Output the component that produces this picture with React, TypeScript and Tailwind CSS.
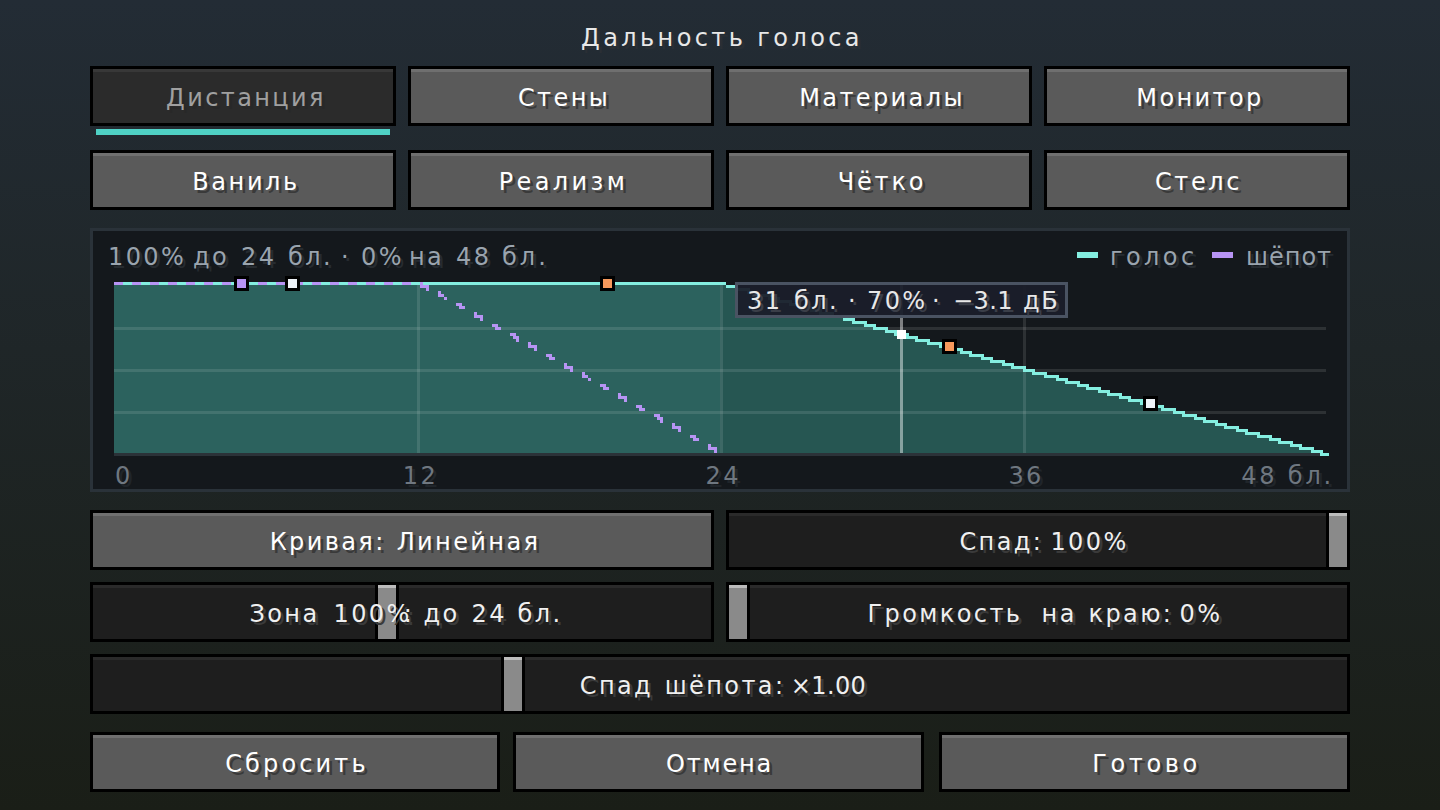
import React from "react";

const TABS = ["Дистанция", "Стены", "Материалы", "Монитор"];

const snap = (v: number) => Math.round(v / 3) * 3;
const floor3 = (v: number) => Math.floor(v / 3) * 3;

// voice curve: flat to 726, then 3px stairs down to the baseline
const voiceSteps = Array.from({ length: 58 }, (_, n) => {
  const x = n === 0 ? 114 : floor3(726 + (n - 1) * 10.65);
  const next = n === 57 ? 1326 : floor3(726 + n * 10.65);
  return { x, next, y: 282 + n * 3 };
});

// whisper curve: dashes of 9px every 18px
const whisperY = (x: number) => 282 + (x - 420) * 0.5625;
const whisperCols: { x: number; top: number; h: number }[] = [];
for (let x = 420; x < 720; x += 3) {
  if ((x - 420) % 18 < 9) {
    const top = snap(whisperY(x));
    whisperCols.push({ x, top, h: snap(whisperY(x + 2.9)) + 3 - top });
  }
}
const whisperDashes = Array.from({ length: 17 }, (_, i) => 114 + i * 18);

function Marker({ x, y, color }: { x: number; y: number; color: string }) {
  return (
    <g>
      <rect x={x} y={y} width="15" height="15" fill="#000" />
      <rect x={x + 3} y={y + 3} width="9" height="9" fill={color} />
    </g>
  );
}

function Chart() {
  return (
    <svg className="ml-[21px] block" width="1215" height="180" viewBox="114 276 1215 180" shapeRendering="crispEdges">
      {voiceSteps.map((s) => (
        <rect
          key={s.x}
          x={s.x}
          y={s.y + 3}
          width={s.next - s.x}
          height={Math.max(453 - s.y - 3, 0)}
          fill={s.x < 720 ? "#2c625e" : "#265652"}
        />
      ))}
      <rect x="114" y="285" width="606" height="168" fill="#2c625e" />
      <rect x="720" y="285" width="9" height="168" fill="#265652" />
      {[327, 369, 411].map((y) => (
        <rect key={y} x="114" y={y} width="1212" height="3" fill="#fff" fillOpacity="0.11" />
      ))}
      {[417, 720, 1023].map((x) => (
        <rect key={x} x={x} y="285" width="3" height="168" fill="#fff" fillOpacity="0.11" />
      ))}
      <rect x="114" y="453" width="1212" height="3" fill="#2b3238" />
      <rect x="900" y="285" width="3" height="168" fill="#fff" fillOpacity="0.45" />
      {voiceSteps.map((s, i) => (
        <rect
          key={s.x}
          x={s.x}
          y={s.y}
          width={s.next - s.x + (i === 0 || i === 1 ? 0 : 3)}
          height="3"
          fill="#84eee0"
        />
      ))}
      {whisperDashes.map((x) => (
        <rect key={x} x={x} y="282" width="9" height="3" fill="#b794f4" />
      ))}
      {whisperCols.map((c) => (
        <rect key={c.x} x={c.x} y={c.top} width="3" height={c.h} fill="#b794f4" />
      ))}
      <Marker x={234} y={276} color="#b794f4" />
      <Marker x={285} y={276} color="#edf2f7" />
      <Marker x={600} y={276} color="#f6995c" />
      <Marker x={942} y={339} color="#f6995c" />
      <Marker x={1143} y={396} color="#edf2f7" />
      <rect x="897" y="330" width="9" height="9" fill="#fff" />
    </svg>
  );
}

// word with a fixed advance, the game font's spacing is uneven
function W({ w, children }: { w?: string; children: React.ReactNode }) {
  return <span className={`shrink-0 ${w ?? ""}`}>{children}</span>;
}

function Button({ label, active, children }: { label: React.ReactNode; active?: boolean; children?: React.ReactNode }) {
  return (
    <div
      className={
        active
          ? "relative flex h-[60px] items-center justify-center border-[3px] border-black bg-[#2b2b2b] pt-[4px] pl-[6px] text-[#a0a0a0] shadow-[inset_0_3px_0_#383838] [text-shadow:3px_3px_0_#282828]"
          : "relative flex h-[60px] items-center justify-center border-[3px] border-black bg-[#5a5a5a] pt-[4px] pl-[6px] text-white shadow-[inset_0_3px_0_#6f6f6f] [text-shadow:3px_3px_0_#3a3a3a]"
      }
    >
      {label}
      {children}
    </div>
  );
}

function Slider({ children, handle, shift }: { children: React.ReactNode; handle: string; shift: string }) {
  return (
    <div className="relative flex h-[60px] items-center justify-center border-[3px] border-black bg-[#1e1e1e] pt-[4px] text-[#f0f0f0] shadow-[inset_0_3px_0_#2a2a2a] [text-shadow:3px_3px_0_#3a3a3a]">
      <div className={`absolute top-0 bottom-0 w-[24px] border-x-[3px] border-black bg-[#8a8a8a] shadow-[inset_0_3px_0_#bcbcbc] ${handle}`} />
      <div className={`relative flex ${shift}`}>{children}</div>
    </div>
  );
}

export default function App() {
  return (
    <div className="flex h-[810px] w-[1440px] flex-col overflow-hidden bg-linear-to-b from-[#232c35] to-[#1a1e17] px-[90px] font-['DejaVu_Sans',sans-serif] text-[24px] leading-none tracking-[2.4px] whitespace-nowrap">
      <div className="flex h-[66px] shrink-0 items-center justify-center pt-[10px] pl-[4px] tracking-[3.4px] text-[#e8e8e8] [text-shadow:3px_3px_0_#2a2f35]">
        Дальность голоса
      </div>

      <div className="grid grid-cols-4 gap-3">
        {TABS.map((t, i) => (
          <Button key={t} label={t} active={i === 0}>
            {i === 0 && <div className="absolute right-[3px] -bottom-[12px] left-[3px] h-[6px] bg-[#4fd1c5]" />}
          </Button>
        ))}
      </div>

      <div className="mt-6 grid grid-cols-4 gap-3">
        <Button label={<span className="tracking-[2.6px]">Ваниль</span>} />
        <Button label={<span className="-ml-[1px] tracking-[3.4px]">Реализм</span>} />
        <Button label={<span className="tracking-[2.8px]">Чётко</span>} />
        <Button label={<span className="-ml-[3px] tracking-[2.6px]">Стелс</span>} />
      </div>

      {/* graph panel */}
      <div className="relative mt-[18px] h-[264px] border-[3px] border-[#2a3239] bg-[#14181c]">
        <div className="flex h-[45px] items-center justify-between pt-[7px] pr-[13px] pl-[15px] text-[#9aa4ae] [text-shadow:3px_3px_0_#262b30]">
          <div className="flex">
            <W w="w-[85px]">100%</W>
            <W w="w-[48px]">до</W>
            <W w="w-[47px]">24</W>
            <W w="w-[53px]">бл.</W>
            <W w="w-[20px]">·</W>
            <W w="w-[48px]">0%</W>
            <W w="w-[47px]">на</W>
            <W w="w-[46px]">48</W>
            <W w="tracking-[3px]">бл.</W>
          </div>
          <div className="flex items-center">
            <div className="mr-[12px] mb-[5px] h-[6px] w-[21px] bg-[#84eee0]" />
            <W w="w-[102px] tracking-[3.4px]">голос</W>
            <div className="mr-[13px] mb-[5px] h-[6px] w-[21px] bg-[#b794f4]" />
            <W w="w-[88px] tracking-[1px]">шёпот</W>
          </div>
        </div>
        <Chart />
        <div className="flex h-[33px] items-center pt-[7px] pr-[13px] pl-[22px] text-[#6f7780] [text-shadow:3px_3px_0_#20252a]">
          <span className="w-[288px]">0</span>
          <span className="w-[303px]">12</span>
          <span className="w-[303px]">24</span>
          <span className="w-[233px]">36</span>
          <span className="flex-1 text-right tracking-[2.8px]">48 бл.</span>
        </div>
        <div className="absolute top-[51px] left-[642px] flex h-[36px] w-[333px] items-center border-[3px] border-[#4a5362] bg-[#1a1e2a]/95 pt-[2px] pl-[9px] text-[#e8e8e8] [text-shadow:3px_3px_0_#3a3e48]">
          <W w="w-[47px]">31</W>
          <W w="w-[54px]">бл.</W>
          <W w="w-[19px]">·</W>
          <W w="w-[65px]">70%</W>
          <W w="w-[21px]">·</W>
          <W w="w-[70px] tracking-[0.4px]">−3.1</W>
          <W w="tracking-[1.6px]">дБ</W>
        </div>
      </div>

      <div className="mt-[18px] grid grid-cols-2 gap-3">
        <Button
          label={
            <div className="flex">
              <W w="w-[127px]">Кривая:</W>
              <W>Линейная</W>
            </div>
          }
        />
        <Slider handle="left-[597px]" shift="pl-[12px]">
          <W w="w-[91px]">Спад:</W>
          <W>100%</W>
        </Slider>
        <Slider handle="left-[282px]" shift="pl-[8px]">
          <W w="w-[84px]">Зона</W>
          <W w="w-[90px]">
            100%<span className="-ml-[8px]">:</span>
          </W>
          <W w="w-[48px]">до</W>
          <W w="w-[46px]">24</W>
          <W>бл.</W>
        </Slider>
        <Slider handle="-left-[3px]" shift="pl-[14px]">
          <W w="w-[174px]">Громкость</W>
          <W w="w-[47px]">на</W>
          <W w="w-[91px]">краю:</W>
          <W>0%</W>
        </Slider>
      </div>

      <div className="mt-3">
        <Slider handle="left-[408px]" shift="pl-[6px]">
          <W w="w-[85px]">Спад</W>
          <W w="w-[126px]">шёпота:</W>
          <W w="tracking-[0.4px]">×1.00</W>
        </Slider>
      </div>

      <div className="mt-[18px] flex">
        <div className="w-[410px]">
          <Button label={<span className="-ml-[2px] tracking-[3.15px]">Сбросить</span>} />
        </div>
        <div className="ml-[13px] w-[411px]">
          <Button label={<span className="-ml-[4px] tracking-[1.8px]">Отмена</span>} />
        </div>
        <div className="ml-[15px] w-[411px]">
          <Button label={<span className="-ml-[2px] tracking-[3.6px]">Готово</span>} />
        </div>
      </div>
    </div>
  );
}
